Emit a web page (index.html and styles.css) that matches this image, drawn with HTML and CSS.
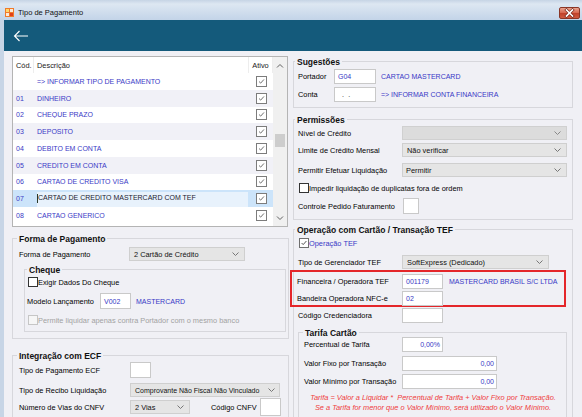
FILE: index.html
```html
<!DOCTYPE html>
<html>
<head>
<meta charset="utf-8">
<title>Tipo de Pagamento</title>
<link rel="stylesheet" href="styles.css">
</head>
<body>
<div class="window">
  <div class="titlebar">
    <svg class="app-icon" viewBox="0 0 9 9">
      <rect x="0" y="0" width="9" height="9" fill="#f07a2a"/>
      <rect x="1" y="1" width="3" height="3" fill="#ffd76a"/>
      <rect x="5" y="1" width="3" height="3" fill="#fbe9d8"/>
      <rect x="1" y="5" width="3" height="3" fill="#fbe9d8"/>
      <rect x="5" y="5" width="3" height="3" fill="#e0401a"/>
    </svg>
    <span class="title">Tipo de Pagamento</span>
    <div class="close-btn">
      <svg viewBox="0 0 21 12" width="21" height="12">
        <path d="M7.5 3 L13.5 9 M13.5 3 L7.5 9" stroke="#7a2a1c" stroke-width="3" stroke-linecap="square"/>
        <path d="M7.5 3 L13.5 9 M13.5 3 L7.5 9" stroke="#ffffff" stroke-width="1.6" stroke-linecap="square"/>
      </svg>
    </div>
  </div>
  <div class="frame">
    <div class="frame-left"></div>
    <div class="client">
      <div class="toolbar">
        <svg class="back" viewBox="0 0 16 12" width="16" height="12">
          <path d="M15 6 H1.5 M6.5 1 L1.5 6 L6.5 11" stroke="#ffffff" stroke-width="1.1" fill="none"/>
        </svg>
      </div>
      <div class="body">
        <div class="col-left">
          <div class="grid">
            <div class="grid-data">
              <div class="grow ghead"><div class="c-cod">Cód.</div><div class="c-desc">Descrição</div><div class="c-ativo">Ativo</div></div>
              <div class="grow"><div class="c-cod"></div><div class="c-desc">=&gt; INFORMAR TIPO DE PAGAMENTO</div><div class="c-ativo"><span class="gcb"><svg viewBox="0 0 11 11"><path d="M2.5 5.5 L4.5 7.5 L8.5 3" stroke="#505050" stroke-width="1" fill="none"/></svg></span></div></div>
              <div class="grow alt"><div class="c-cod">01</div><div class="c-desc">DINHEIRO</div><div class="c-ativo"><span class="gcb"><svg viewBox="0 0 11 11"><path d="M2.5 5.5 L4.5 7.5 L8.5 3" stroke="#505050" stroke-width="1" fill="none"/></svg></span></div></div>
              <div class="grow"><div class="c-cod">02</div><div class="c-desc">CHEQUE PRAZO</div><div class="c-ativo"><span class="gcb"><svg viewBox="0 0 11 11"><path d="M2.5 5.5 L4.5 7.5 L8.5 3" stroke="#505050" stroke-width="1" fill="none"/></svg></span></div></div>
              <div class="grow alt"><div class="c-cod">03</div><div class="c-desc">DEPOSITO</div><div class="c-ativo"><span class="gcb"><svg viewBox="0 0 11 11"><path d="M2.5 5.5 L4.5 7.5 L8.5 3" stroke="#505050" stroke-width="1" fill="none"/></svg></span></div></div>
              <div class="grow"><div class="c-cod">04</div><div class="c-desc">DEBITO EM CONTA</div><div class="c-ativo"><span class="gcb"><svg viewBox="0 0 11 11"><path d="M2.5 5.5 L4.5 7.5 L8.5 3" stroke="#505050" stroke-width="1" fill="none"/></svg></span></div></div>
              <div class="grow alt"><div class="c-cod">05</div><div class="c-desc">CREDITO EM CONTA</div><div class="c-ativo"><span class="gcb"><svg viewBox="0 0 11 11"><path d="M2.5 5.5 L4.5 7.5 L8.5 3" stroke="#505050" stroke-width="1" fill="none"/></svg></span></div></div>
              <div class="grow"><div class="c-cod">06</div><div class="c-desc">CARTAO DE CREDITO VISA</div><div class="c-ativo"><span class="gcb"><svg viewBox="0 0 11 11"><path d="M2.5 5.5 L4.5 7.5 L8.5 3" stroke="#505050" stroke-width="1" fill="none"/></svg></span></div></div>
              <div class="grow sel"><div class="c-cod">07</div><div class="c-desc"><div class="editor"><span class="caret"></span>CARTAO DE CREDITO MASTERCARD COM TEF</div></div><div class="c-ativo"><span class="gcb"><svg viewBox="0 0 11 11"><path d="M2.5 5.5 L4.5 7.5 L8.5 3" stroke="#505050" stroke-width="1" fill="none"/></svg></span></div></div>
              <div class="grow"><div class="c-cod">08</div><div class="c-desc">CARTAO GENERICO</div><div class="c-ativo"><span class="gcb"><svg viewBox="0 0 11 11"><path d="M2.5 5.5 L4.5 7.5 L8.5 3" stroke="#505050" stroke-width="1" fill="none"/></svg></span></div></div>
            </div>
            <div class="vscroll">
              <div class="sbtn"><svg viewBox="0 0 8 5" width="8" height="5"><path d="M1 4.5 L4 1.5 L7 4.5" stroke="#606060" fill="none"/></svg></div>
              <div class="thumb"></div>
              <div class="sfill"></div>
              <div class="sbtn"><svg viewBox="0 0 8 5" width="8" height="5"><path d="M1 0.5 L4 3.5 L7 0.5" stroke="#606060" fill="none"/></svg></div>
            </div>
          </div>

          <div class="group g-forma">
            <div class="gt">Forma de Pagamento</div>
            <div class="frow h14 mt2"><span class="lbl w110">Forma de Pagamento</span><div class="select w116"><span>2 Cartão de Crédito</span><svg class="chev" viewBox="0 0 7 4"><path d="M0.5 0.5 L3.5 3.5 L6.5 0.5" stroke="#777" fill="none"/></svg></div></div>
            <div class="group g-cheque">
              <div class="gt">Cheque</div>
              <div class="frow h12"><span class="cbx"></span><span>Exigir Dados Do Cheque</span></div>
              <div class="frow h16 mt5"><span class="lbl w73">Modelo Lançamento</span><span class="input w31 h16 blue">V002</span><span class="blue caps ml5">MASTERCARD</span></div>
              <div class="frow h14 mt4 disabled"><span class="cbx off"></span><span>Permite liquidar apenas contra Portador com o mesmo banco</span></div>
            </div>
          </div>

          <div class="group g-ecf">
            <div class="gt">Integração com ECF</div>
            <div class="frow h16"><span class="lbl w111">Tipo de Pagamento ECF</span><span class="input w21 h16"></span></div>
            <div class="frow h14 mt5"><span class="lbl w111">Tipo de Recibo Liquidação</span><div class="select w150 tight"><span>Comprovante Não Fiscal Não Vinculado</span><svg class="chev" viewBox="0 0 7 4"><path d="M0.5 0.5 L3.5 3.5 L6.5 0.5" stroke="#777" fill="none"/></svg></div></div>
            <div class="frow h18 mt1"><span class="lbl w111">Número de Vias do CNFV</span><div class="select w60"><span>2 Vias</span><svg class="chev" viewBox="0 0 7 4"><path d="M0.5 0.5 L3.5 3.5 L6.5 0.5" stroke="#777" fill="none"/></svg></div><span class="lbl w49 ml21">Código CNFV</span><span class="input w21 h18"></span></div>
          </div>
        </div>

        <div class="col-right">
          <div class="group g-sug">
            <div class="gt">Sugestões</div>
            <div class="frow h15 mt1"><span class="lbl w36">Portador</span><span class="input w42 blue">G04</span><span class="blue caps ml5">CARTAO MASTERCARD</span></div>
            <div class="frow h15 mt3"><span class="lbl w36">Conta</span><span class="input w42 dots">. .</span><span class="blue caps ml5">=&gt; INFORMAR CONTA FINANCEIRA</span></div>
          </div>

          <div class="group g-perm">
            <div class="gt">Permissões</div>
            <div class="frow h14"><span class="lbl w104">Nível de Crédito</span><div class="select w165 dis"><span></span><svg class="chev" viewBox="0 0 7 4"><path d="M0.5 0.5 L3.5 3.5 L6.5 0.5" stroke="#888" fill="none"/></svg></div></div>
            <div class="frow h14 mt3"><span class="lbl w104">Limite de Crédito Mensal</span><div class="select w165"><span>Não verificar</span><svg class="chev" viewBox="0 0 7 4"><path d="M0.5 0.5 L3.5 3.5 L6.5 0.5" stroke="#777" fill="none"/></svg></div></div>
            <div class="frow h14 mt6"><span class="lbl w104">Permitir Efetuar Liquidação</span><div class="select w165 pl3"><span>Permitir</span><svg class="chev" viewBox="0 0 7 4"><path d="M0.5 0.5 L3.5 3.5 L6.5 0.5" stroke="#777" fill="none"/></svg></div></div>
            <div class="frow h14 mt4"><span class="cbx"></span><span>Impedir liquidação de duplicatas fora de ordem</span></div>
            <div class="frow h16 mt3"><span class="lbl w105">Controle Pedido Faturamento</span><span class="input w16 h16"></span></div>
          </div>

          <div class="group g-tef">
            <div class="gt">Operação com Cartão / Transação TEF</div>
            <div class="frow h14"><span class="cbx chk"><svg viewBox="0 0 10 10"><path d="M2 5 L4 7 L8 2.5" stroke="#404040" stroke-width="1.1" fill="none"/></svg></span><span class="blue">Operação TEF</span></div>
            <div class="frow h14 mt5"><span class="lbl w104">Tipo de Gerenciador TEF</span><div class="select w147"><span>SoftExpress (Dedicado)</span><svg class="chev" viewBox="0 0 7 4"><path d="M0.5 0.5 L3.5 3.5 L6.5 0.5" stroke="#777" fill="none"/></svg></div></div>
            <div class="highlight">
              <div class="frow h14"><span class="lbl w105">Financeira / Operadora TEF</span><span class="input w41 blue">001179</span><span class="blue caps ml6">MASTERCARD BRASIL S/C LTDA</span></div>
              <div class="frow h14 mt3"><span class="lbl w105">Bandeira Operadora NFC-e</span><span class="input w41 blue">02</span></div>
            </div>
            <div class="frow h15 mt1"><span class="lbl w104">Código Credenciadora</span><span class="input w41"></span></div>
            <div class="group g-tarifa">
              <div class="gt">Tarifa Cartão</div>
              <div class="frow h15 mtn2"><span class="lbl w98">Percentual de Tarifa</span><span class="input w41 num blue">0,00%</span></div>
              <div class="frow h15 mt4"><span class="lbl w98">Valor Fixo por Transação</span><span class="input w95 num blue">0,00</span></div>
              <div class="frow h15 mt3"><span class="lbl w98">Valor Mínimo por Transação</span><span class="input w95 num blue">0,00</span></div>
              <p class="note">Tarifa = Valor a Liquidar *&nbsp; Percentual de Tarifa + Valor Fixo por Transação.<br>Se a Tarifa for menor que o Valor Mínimo, será utilizado o Valor Mínimo.</p>
            </div>
          </div>
        </div>
      </div>
    </div>
  </div>
</div>
</body>
</html>
```

FILE: styles.css
```css
* { box-sizing: border-box; margin: 0; padding: 0; }
html, body { width: 582px; height: 417px; overflow: hidden; }
body {
  font-family: "Liberation Sans", Arial, sans-serif;
  font-size: 7.4px;
  color: #000;
  background: #f0f0f5;
}
.window { width: 582px; height: 417px; display: flex; flex-direction: column; background: #c7d5e6; }

/* title bar */
.titlebar {
  height: 20px; flex: none; display: flex; align-items: center;
  padding: 5px 2px 0 5px;
  background: linear-gradient(#c6d4e5 0, #dde7f2 4px, #c3d4e8 100%);
}
.app-icon { width: 9px; height: 9px; margin-right: 4px; flex: none; }
.title { font-size: 7.5px; color: #111; }
.close-btn {
  margin-left: auto; width: 21px; height: 12px; display: flex;
  border: 1px solid #8a3626; border-radius: 2px;
  background: linear-gradient(#e8a390 0, #d86b52 45%, #c1422a 55%, #cf5a3f 100%);
  align-items: center; justify-content: center; overflow: hidden;
}
.close-btn svg { flex: none; }

.frame { flex: 1; display: flex; min-height: 0; }
.frame-left { width: 4px; flex: none; background: #c7d5e6; }
.client { flex: 1; display: flex; flex-direction: column; min-width: 0; }
.toolbar { height: 31px; flex: none; background: #145a7b; display: flex; align-items: center; padding-left: 9px; }
.back { display: block; }
.body { flex: 1; background: #f0f0f5; display: flex; gap: 4px; padding: 0 9px 0 8px; overflow: hidden; }
.col-left { width: 277px; flex: none; }
.col-right { width: 280px; flex: none; }

/* grid */
.grid { margin-top: 5px; width: 276px; height: 171px; border: 1px solid #b4b4b4; background: #fff; display: flex; }
.grid-data { width: 260px; }
.grow { display: grid; grid-template-columns: 21px 215px 24px; height: 16.75px; align-items: center; font-size: 7px; color: #3a3ac6; background: #fff; }
.grow.alt { background: #f1f1f7; }
.grow.ghead { height: 16px; color: #1a1a1a; font-size: 7.4px; }
.ghead > div { border-right: 1px solid #ededed; height: 100%; display: flex; align-items: center; }
.ghead .c-ativo { justify-content: center; }
.c-cod { padding-left: 3px; white-space: nowrap; }
.c-desc { padding-left: 3px; white-space: nowrap; overflow: hidden; }
.c-ativo { display: flex; justify-content: center; align-items: center; }
.gcb { width: 11px; height: 11px; border: 1px solid #7c7c7c; background: #fff; display: block; }
.gcb svg { width: 9px; height: 9px; display: block; }
.grow.sel { background: #cce4fa; }
.grow.sel .c-desc { align-self: stretch; padding: 1.5px 1px 0 3px; }
.editor { height: 100%; background: #e8f2fc; color: #1c1c30; display: flex; align-items: flex-start; padding-top: 2px; }
.caret { width: 1px; height: 9px; background: #2a3a2a; flex: none; }
.vscroll { width: 14px; background: #f0f0f0; display: flex; flex-direction: column; align-items: center; }
.sbtn { height: 16px; width: 14px; display: flex; align-items: center; justify-content: center; flex: none; }
.thumb { width: 10px; height: 13px; background: #cdcdcd; margin-top: 61px; flex: none; }
.sfill { flex: 1; }

/* groups */
.group { border: 1px solid #d7d7dc; }
.gt {
  display: table; font-weight: bold; font-size: 8.5px; line-height: 12px;
  padding: 0 2px; background: #f0f0f5; color: #111; margin-top: -6px; margin-left: -2px;
  white-space: nowrap;
}
.g-forma { margin-top: 11px; padding: 0 2px 6px 6px; }
.g-cheque { margin-top: 8px; margin-left: 5px; padding: 0 0 4px 2px; }
.g-cheque .gt { margin-left: 0; }
.g-ecf { margin-top: 16px; padding: 0 2px 10px 6px; }
.g-sug { margin-top: 10px; padding: 0 6px 5px 4px; }
.g-sug .gt, .g-perm .gt, .g-tef > .gt { margin-left: -3px; }
.g-perm { margin-top: 11px; padding: 0 6px 5px 4px; }
.g-tef { margin-top: 9px; padding: 0 5px 40px 4px; }
.g-tarifa { margin-top: 9px; padding: 0 4px 6px 5px; }
.g-tarifa .gt { margin-left: -1px; }

/* form rows */
.frow { display: flex; align-items: center; white-space: nowrap; }
.h12 { height: 12px; } .h14 { height: 14px; } .h15 { height: 15px; } .h16 { height: 16px; } .h18 { height: 18px; }
.mt1 { margin-top: 1px; } .mt2 { margin-top: 2px; } .mt3 { margin-top: 3px; } .mt4 { margin-top: 4px; }
.mt5 { margin-top: 5px; } .mt6 { margin-top: 6px; } .mtn2 { margin-top: -2px; }
.ml5 { margin-left: 5px; } .ml6 { margin-left: 6px; } .ml21 { margin-left: 21px; }
.lbl { flex: none; }
.w16 { width: 16px; } .w21 { width: 21px; } .w31 { width: 31px; } .w36 { width: 36px; } .w41 { width: 41px; }
.w42 { width: 42px; } .w49 { width: 49px; } .w60 { width: 60px; } .w73 { width: 73px; } .w95 { width: 95px; }
.w98 { width: 98px; } .w104 { width: 104px; } .w105 { width: 105px; } .w110 { width: 110px; } .w111 { width: 111px; }
.w116 { width: 116px; } .w147 { width: 147px; } .w150 { width: 150px; } .w165 { width: 165px; }

.blue { color: #3838c6; }
.caps { font-size: 7px; }
.input {
  flex: none; height: 15px; background: #fff; border: 1px solid #c9c9c9;
  display: flex; align-items: center; padding: 0 3px; font-size: 7px;
}
.input.h16 { height: 16px; } .input.h18 { height: 18px; }
.input.num { justify-content: flex-end; padding-right: 2px; }
.input.dots { padding-left: 7px; letter-spacing: 1.2px; color: #222; }
.select {
  flex: none; height: 14px; background: #e5e5e5; border: 1px solid #cfcfcf;
  display: flex; align-items: center; justify-content: space-between; padding: 0 5px 0 4px;
  color: #111;
}
.select.tight { font-size: 7px; padding-right: 4px; }
.select.pl3 { padding-left: 3px; }
.select.dis { background: #dcdcdc; border-color: #d0d0d0; }
.chev { width: 7px; height: 4px; flex: none; }
.cbx { width: 10px; height: 10px; border: 1px solid #333; background: #fff; flex: none; margin-left: 1px; display: block; }
.cbx.off { border-color: #c6c6c6; background: #f6f6f6; }
.cbx.chk { border-color: #6f6f6f; }
.cbx svg { width: 8px; height: 8px; display: block; }
.disabled { color: #a2a2a2; }

.highlight { margin: 1px 0 0 -8px; width: 276px; border: 2px solid #e4262a; padding: 2px 0 0 5px; height: 37px; }
.note { margin-top: 4px; font-style: italic; font-size: 7.4px; line-height: 10px; color: #ef3d3d; text-align: center; white-space: nowrap; }
```
